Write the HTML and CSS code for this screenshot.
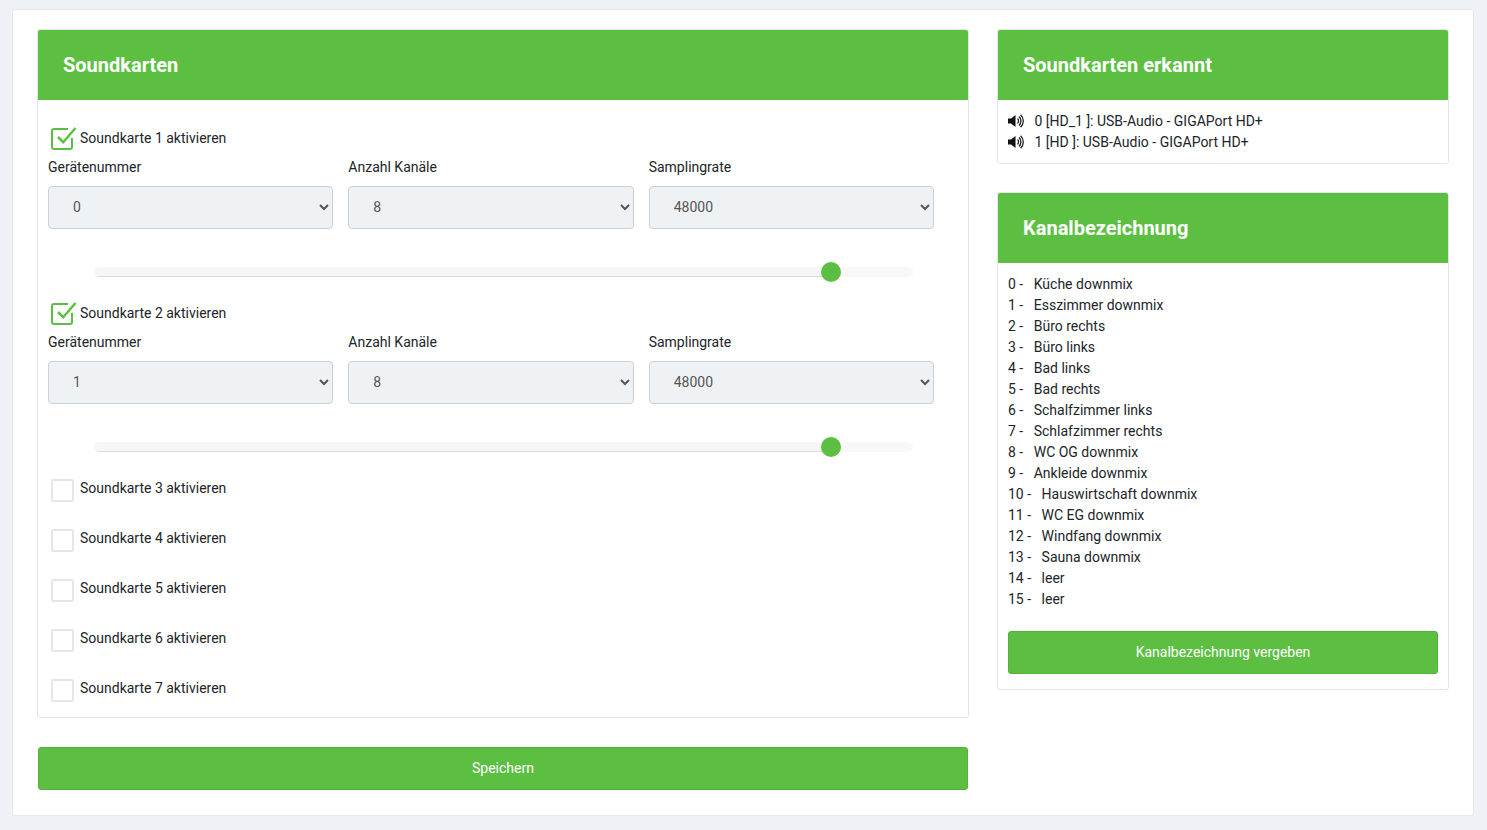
FILE: index.html
```html
<!DOCTYPE html>
<html lang="de">
<head>
    <meta charset="UTF-8">
    <meta name="viewport" content="width=device-width, initial-scale=1.0">
    <title>Soundkarten</title>
    <link rel="stylesheet" href="styles.css">
</head>
<body>
    <div class="page">
        <div class="left">
            <div class="card">
                <div class="card-head">Soundkarten</div>
                <div class="card-body sound-body">
                    <div class="sound">
                        <label class="check">
                            <span class="box on"><svg viewBox="0 0 26 26" width="26" height="26"><path d="M21 13v9a2 2 0 0 1-2 2H3a2 2 0 0 1-2-2V6a2 2 0 0 1 2-2h14" fill="none" stroke="#5cbf42" stroke-width="2"/><path d="M7 12l5.2 5.2L24.5 3" fill="none" stroke="#5cbf42" stroke-width="2.5"/></svg></span>
                            Soundkarte 1 aktivieren
                        </label>
                        <div class="fields">
                            <div class="field">
                                <label>Gerätenummer</label>
                                <select><option>0</option><option>1</option></select>
                            </div>
                            <div class="field">
                                <label>Anzahl Kanäle</label>
                                <select><option>8</option></select>
                            </div>
                            <div class="field">
                                <label>Samplingrate</label>
                                <select><option>48000</option></select>
                            </div>
                        </div>
                        <input class="slider" type="range" min="0" max="100" value="91">
                    </div>
                    <div class="sound">
                        <label class="check">
                            <span class="box on"><svg viewBox="0 0 26 26" width="26" height="26"><path d="M21 13v9a2 2 0 0 1-2 2H3a2 2 0 0 1-2-2V6a2 2 0 0 1 2-2h14" fill="none" stroke="#5cbf42" stroke-width="2"/><path d="M7 12l5.2 5.2L24.5 3" fill="none" stroke="#5cbf42" stroke-width="2.5"/></svg></span>
                            Soundkarte 2 aktivieren
                        </label>
                        <div class="fields">
                            <div class="field">
                                <label>Gerätenummer</label>
                                <select><option>1</option><option>0</option></select>
                            </div>
                            <div class="field">
                                <label>Anzahl Kanäle</label>
                                <select><option>8</option></select>
                            </div>
                            <div class="field">
                                <label>Samplingrate</label>
                                <select><option>48000</option></select>
                            </div>
                        </div>
                        <input class="slider" type="range" min="0" max="100" value="91">
                    </div>
                    <label class="check off-row"><span class="box"></span>Soundkarte 3 aktivieren</label>
                    <label class="check off-row"><span class="box"></span>Soundkarte 4 aktivieren</label>
                    <label class="check off-row"><span class="box"></span>Soundkarte 5 aktivieren</label>
                    <label class="check off-row"><span class="box"></span>Soundkarte 6 aktivieren</label>
                    <label class="check off-row"><span class="box"></span>Soundkarte 7 aktivieren</label>
                </div>
            </div>
            <button class="btn save-btn">Speichern</button>
        </div>
        <div class="right">
            <div class="card">
                <div class="card-head">Soundkarten erkannt</div>
                <div class="card-body list-body">
                    <div class="line"><svg class="speaker" viewBox="0 0 17 14" width="17" height="14"><path d="M0 4.5h3L7.5 1v12L3 9.5H0z" fill="#111"/><path d="M9.5 4.6a3.2 3.2 0 0 1 0 4.8M11 2.6a6 6 0 0 1 0 8.8M12.6.8a8.5 8.5 0 0 1 0 12.4" fill="none" stroke="#222" stroke-width="1.3"/></svg>0 [HD_1 ]: USB-Audio - GIGAPort HD+</div>
                    <div class="line"><svg class="speaker" viewBox="0 0 17 14" width="17" height="14"><path d="M0 4.5h3L7.5 1v12L3 9.5H0z" fill="#111"/><path d="M9.5 4.6a3.2 3.2 0 0 1 0 4.8M11 2.6a6 6 0 0 1 0 8.8M12.6.8a8.5 8.5 0 0 1 0 12.4" fill="none" stroke="#222" stroke-width="1.3"/></svg>1 [HD ]: USB-Audio - GIGAPort HD+</div>
                </div>
            </div>
            <div class="card">
                <div class="card-head">Kanalbezeichnung</div>
                <div class="card-body names-body">
                    <div class="line">0 -<span class="name">Küche downmix</span></div>
                    <div class="line">1 -<span class="name">Esszimmer downmix</span></div>
                    <div class="line">2 -<span class="name">Büro rechts</span></div>
                    <div class="line">3 -<span class="name">Büro links</span></div>
                    <div class="line">4 -<span class="name">Bad links</span></div>
                    <div class="line">5 -<span class="name">Bad rechts</span></div>
                    <div class="line">6 -<span class="name">Schalfzimmer links</span></div>
                    <div class="line">7 -<span class="name">Schlafzimmer rechts</span></div>
                    <div class="line">8 -<span class="name">WC OG downmix</span></div>
                    <div class="line">9 -<span class="name">Ankleide downmix</span></div>
                    <div class="line">10 -<span class="name">Hauswirtschaft downmix</span></div>
                    <div class="line">11 -<span class="name">WC EG downmix</span></div>
                    <div class="line">12 -<span class="name">Windfang downmix</span></div>
                    <div class="line">13 -<span class="name">Sauna downmix</span></div>
                    <div class="line">14 -<span class="name">leer</span></div>
                    <div class="line">15 -<span class="name">leer</span></div>
                    <button class="btn names-btn">Kanalbezeichnung vergeben</button>
                </div>
            </div>
        </div>
    </div>
</body>
</html>
```

FILE: styles.css
```css
* {
    box-sizing: border-box;
}
html, body {
    height: 100%;
}
body {
    margin: 0;
    background: #eef1f5;
    font-family: Roboto, "Liberation Sans", sans-serif;
    font-size: 14px;
    color: #212529;
    overflow: hidden;
}
.page {
    margin: 9px 13px 0 12px;
    height: 807px;
    background: #fff;
    border: 1px solid #e4e7ec;
    border-radius: 3px;
    padding: 19px 24px 0 24px;
    display: grid;
    grid-template-columns: 932px 452px;
    column-gap: 28px;
    align-items: start;
}
.card {
    background: #fff;
    border: 1px solid #e3e5e8;
    border-radius: 3px;
}
.card-head {
    background: #5cbf42;
    color: #fff;
    font-size: 20px;
    font-weight: 700;
    height: 70px;
    line-height: 70px;
    padding-left: 25px;
    border-radius: 2px 2px 0 0;
}
.right {
    display: flex;
    flex-direction: column;
    gap: 28px;
}
.card-body {
    padding: 0 10px;
}
.sound-body {
    height: 617px;
    padding-top: 26px;
}
.sound {
    height: 162px;
}
.sound + .sound {
    margin-top: 13px;
}
.check {
    display: flex;
    align-items: center;
    height: 24px;
    padding-left: 3px;
    line-height: 22px;
}
.box {
    width: 23px;
    height: 23px;
    margin-right: 6px;
    border: 2px solid #e6e6e6;
    border-radius: 2px;
    flex: none;
}
.box.on {
    border: 0;
    width: 26px;
    height: 26px;
    margin-right: 3px;
}
.box svg {
    display: block;
}
.off-row {
    height: 50px;
}
.off-row .box {
    margin-top: 5px;
}
.fields {
    display: grid;
    grid-template-columns: repeat(3, 285.33px);
    column-gap: 15px;
    margin-top: 7px;
}
.field label {
    display: block;
    height: 24px;
    line-height: 20px;
    margin-bottom: 5px;
}
select {
    display: block;
    width: 100%;
    height: 43px;
    padding-left: 20px;
    padding-bottom: 2px;
    background-color: #eff2f5;
    border: 1px solid #ccd0d8;
    border-radius: 4px;
    font-family: inherit;
    font-size: 14px;
    color: #555;
}
.slider {
    display: block;
    -webkit-appearance: none;
    appearance: none;
    width: 819px;
    height: 20px;
    margin: 33px 0 0 46px;
    background: transparent;
}
.slider::-webkit-slider-runnable-track {
    height: 10px;
    background: linear-gradient(#d9dbdd, #d9dbdd) left bottom / 91% 1px no-repeat, linear-gradient(to right, #f5f6f6 91%, #f8f8f8 91%);
    border-radius: 5px;
}
.slider::-webkit-slider-thumb {
    -webkit-appearance: none;
    width: 20px;
    height: 20px;
    margin-top: -5px;
    border-radius: 50%;
    background: #5cbf42;
}
.list-body {
    height: 63px;
    padding-top: 11px;
}
.line {
    height: 21px;
    line-height: 21px;
    white-space: nowrap;
}
.speaker {
    margin-right: 9.5px;
    vertical-align: -2px;
}
.names-body {
    padding-top: 11px;
    height: 426px;
}
.name {
    margin-left: 10.5px;
}
.btn {
    display: block;
    width: 100%;
    height: 43px;
    padding-bottom: 2px;
    background: #5cbf42;
    border: 1px solid #54b03c;
    border-radius: 3px;
    color: #fff;
    font-family: inherit;
    font-size: 14px;
}
.save-btn {
    width: 930px;
    margin: 29px 0 0 1px;
}
.names-btn {
    margin-top: 21px;
}
```
